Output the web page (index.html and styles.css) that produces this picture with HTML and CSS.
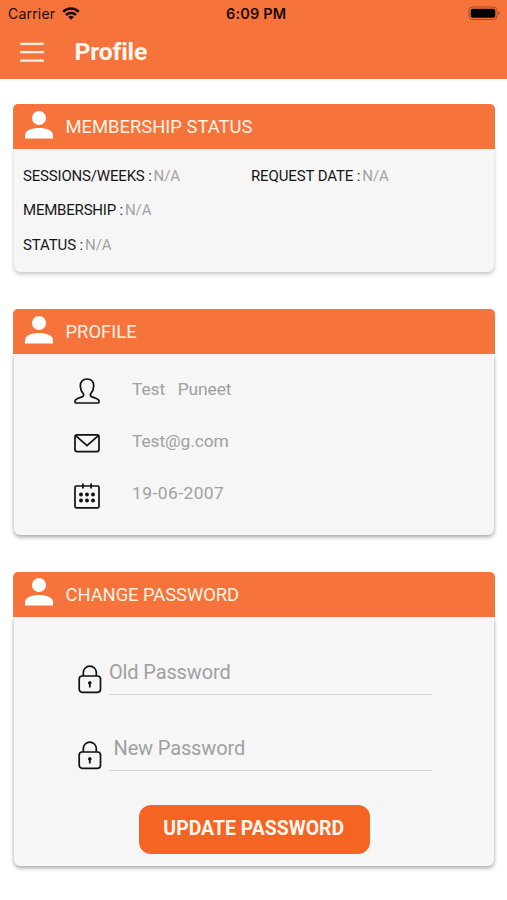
FILE: index.html
```html
<!DOCTYPE html>
<html lang="en">
<head>
<meta charset="utf-8">
<title>Profile</title>
<link rel="stylesheet" href="styles.css">
</head>
<body>
<svg class="defs" width="0" height="0" aria-hidden="true">
  <symbol id="person" viewBox="0 0 28 28"><circle cx="14" cy="7" r="7"/><path d="M0 27.500V24C0 19.500 7 17 14 17s14 2.500 14 7v3.500z"/></symbol>
  <symbol id="lock" viewBox="0 0 24 29"><g fill="none" stroke="#111" stroke-width="1.700"><rect x="1.200" y="11" width="21.300" height="16.300" rx="3"/><path d="M5.300 11V7.600a6.500 6.500 0 0 1 13 0V11"/></g><path d="M11.800 16a1.900 1.900 0 0 1 .9 3.500V22.500h-1.800V19.500a1.900 1.900 0 0 1 .9-3.500z" fill="#111"/></symbol>
</svg>
<header class="top">
  <div class="statusbar">
    <span class="carrier">Carrier</span>
    <svg class="wifi" width="18" height="13" viewBox="0 0 18 13"><g fill="none" stroke="#1a0a04" stroke-width="2.500"><path d="M1.200 4.800a11.100 11.100 0 0 1 15.600 0"/><path d="M4 8a7.100 7.100 0 0 1 10 0"/></g><path d="M9 12.700 6.200 10a4 4 0 0 1 5.600 0z" fill="#1a0a04"/></svg>
    <span class="time">6:09 PM</span>
    <svg class="battery" width="33" height="15" viewBox="0 0 33 15"><rect x="1" y="1" width="28" height="12.500" rx="3.500" fill="none" stroke="#a34d27"/><rect x="2.700" y="2.700" width="24.600" height="9.100" rx="1.800"/><path d="M30.500 5.200c1.600.7 1.600 3.400 0 4.100z" fill="#8f4222"/></svg>
  </div>
  <div class="navbar">
    <svg class="menu" width="24" height="21" viewBox="0 0 24 21"><path d="M1 1.800h22M1 10.200h22M1 18.600h22" stroke="#fff1e8" stroke-width="2.200" stroke-linecap="round"/></svg>
    <h1>Profile</h1>
  </div>
</header>
<main>
  <section class="card membership">
    <h2><svg class="avatar"><use href="#person"/></svg><span class="t-member">MEMBERSHIP STATUS</span></h2>
    <div class="body facts">
      <p><b class="k1">SESSIONS/WEEKS :</b><i>N/A</i></p>
      <p><b class="k2">REQUEST DATE :</b><i>N/A</i></p>
      <p><b class="k3">MEMBERSHIP :</b><i>N/A</i></p>
      <p><b class="k4">STATUS :</b><i>N/A</i></p>
    </div>
  </section>
  <section class="card profile">
    <h2><svg class="avatar"><use href="#person"/></svg><span class="t-profile">PROFILE</span></h2>
    <div class="body details">
      <div class="row"><svg width="26" height="26" viewBox="0 0 26 26" fill="none" stroke="#111" stroke-width="1.700" stroke-linejoin="round"><path d="M9.600 16.300C7.300 13.500 6.300 11 6.300 8c0-4.300 2.500-7 6.700-7s6.700 2.700 6.700 7c0 3-1 5.500-3.300 8.300-.3 1.300.1 2 1.600 2.600l5 1.900c1.500.6 2.100 1.700 2.100 3.300 0 .6-.3.900-.9.900H1.800c-.6 0-.9-.3-.9-.9 0-1.600.6-2.700 2.100-3.300l5-1.900c1.500-.6 1.900-1.300 1.600-2.600z"/></svg><span class="v1">Test&nbsp;&nbsp; Puneet</span></div>
      <div class="row"><svg width="26" height="26" viewBox="0 0 26 26" fill="none" stroke="#111" stroke-width="1.700"><rect x="1" y="4.900" width="24" height="16.700" rx="2"/><path d="m1.700 5.600 11.300 10 11.300-10"/></svg><span class="v2">Test@g.com</span></div>
      <div class="row"><svg width="26" height="26" viewBox="0 0 26 26" fill="none" stroke="#111" stroke-width="1.700"><rect x="1" y="3" width="24" height="21.800" rx="1.200"/><path d="M8.900 .5v5M17.100 .5v5" stroke-width="1.800"/><path d="M7 11.500h.01M13 11.500h.01M19 11.500h.01M7 17.500h.01M13 17.500h.01M19 17.500h.01" stroke-width="3.900" stroke-linecap="round"/></svg><span class="v3">19-06-2007</span></div>
    </div>
  </section>
  <section class="card password">
    <h2><svg class="avatar"><use href="#person"/></svg><span class="t-change">CHANGE PASSWORD</span></h2>
    <form class="body">
      <div class="field"><svg class="lock"><use href="#lock"/></svg><label><span class="f1">Old Password</span></label></div>
      <div class="field second"><svg class="lock"><use href="#lock"/></svg><label><span class="f2">New Password</span></label></div>
      <button type="button"><span>UPDATE PASSWORD</span></button>
    </form>
  </section>
</main>
</body>
</html>
```
FILE: styles.css
```css
* { box-sizing: border-box; }
body { margin: 0; background: #fff; font-family: Roboto, "Liberation Sans", sans-serif; height: 900px; overflow: hidden; }
h1, h2, p { margin: 0; font-weight: 400; }
.defs { display: block; height: 0; }
.top { height: 79px; background: #f6743c; }
.statusbar { height: 27px; display: grid; grid-template-columns: 54px 164px 77px 1fr; align-items: center; padding: 1px 6px 0 8px; font-family: Inter, "Liberation Sans", sans-serif; color: #1a0a04; white-space: nowrap; }
.carrier { font-size: 14px; letter-spacing: .2px; margin-top: -1px; }
.time { font-size: 14.500px; font-weight: 600; letter-spacing: .15px; margin-top: -1px; }
.wifi { margin-top: -2px; }
.battery { justify-self: end; margin-top: -2px; }
.navbar { display: flex; align-items: center; height: 50px; padding-left: 20px; }
.menu { margin-right: 30.500px; }
h1 { color: #fff8f0; font-size: 24.800px; font-weight: 700; line-height: 30px; letter-spacing: -.2px; margin-top: -1px; }
main { padding: 25px 12.500px 0 13px; }
.card { display: flex; flex-direction: column; }
.membership { height: 168px; margin-bottom: 37px; }
.profile { height: 226px; margin-bottom: 36.500px; }
.password { height: 294.500px; }
h2 { flex: none; position: relative; height: 45px; display: flex; align-items: center; padding-left: 12px; background: #f6743c; border-radius: 5px 5px 0 0; color: #fff3e4; font-size: 18.400px; }
.t-change { letter-spacing: -.06px; }
.avatar { width: 28px; height: 28px; margin: -4px 12.500px 0 0; fill: #fff; }
.body { flex: 1; margin: 0 1px; background: #f6f6f6; border-radius: 0 0 6px 6px; box-shadow: 0 2px 4px rgba(0,0,0,.36); }
.membership .body { box-shadow: 0 2px 4px rgba(0,0,0,.24); }
.facts { display: grid; grid-template-columns: 228px 1fr; grid-template-rows: 34px 33px 37px; padding: 10px 0 0 9px; font-size: 15px; }
.facts p { display: flex; align-items: center; white-space: nowrap; }
.facts p:nth-child(n+3) { grid-column: 1; }
.facts b { font-weight: 400; color: #161616; letter-spacing: -.18px; }
.facts .k2, .facts .k4 { letter-spacing: -.12px; }
.facts .k3 { letter-spacing: -.2px; }
.facts i { font-style: normal; color: #a2a2a2; margin-left: 2px; letter-spacing: -.1px; }
.details { padding-top: 11px; }
.row { height: 52.300px; display: flex; align-items: center; padding-left: 60px; color: #a0a0a0; font-size: 17.400px; }
.row svg { margin-right: 32px; }
.row span { margin-top: -5px; }
.v1, .v2 { letter-spacing: -.1px; }
.v3 { letter-spacing: .45px; }
.password .body { display: flex; flex-direction: column; align-items: flex-start; padding: 39.500px 0 0 64px; }
.field { display: flex; height: 40px; }
.second { margin-top: 36px; }
.lock { width: 24px; height: 29px; margin: 9px 7px 0 0; }
label { width: 323px; height: 39px; border-bottom: 1px solid #d5d5d5; color: #a0a0a0; font-size: 20px; line-height: 33px; letter-spacing: -.14px; }
.f2 { margin-left: 4.500px; }
button { width: 231.500px; height: 49px; margin: 32.800px 0 0 60.500px; border: 0; border-radius: 12px; background: #f56423; color: #fff8f0; font: 700 19.400px Roboto, sans-serif; padding: 0; letter-spacing: .02px; }
button span { display: block; margin: -1px 1px 0 0; }
```
